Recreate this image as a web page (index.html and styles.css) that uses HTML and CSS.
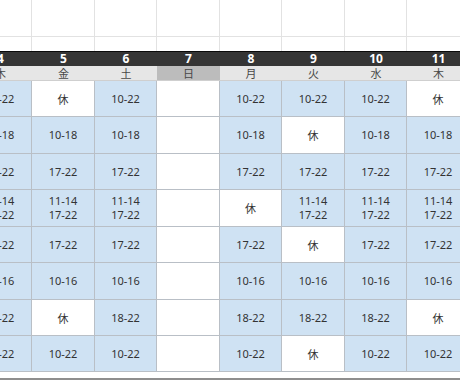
FILE: index.html
```html
<!DOCTYPE html>
<html lang="ja">
<head>
<meta charset="utf-8">
<link rel="stylesheet" href="styles.css">
</head>
<body>
<div class="sheet">
  <div class="row r-top">
    <div class="c"></div><div class="c"></div><div class="c"></div><div class="c"></div><div class="c"></div><div class="c"></div><div class="c"></div><div class="c"></div>
  </div>
  <div class="row r-top2">
    <div class="c"></div><div class="c"></div><div class="c"></div><div class="c"></div><div class="c"></div><div class="c"></div><div class="c"></div><div class="c"></div>
  </div>
  <div class="row r-date">
    <div class="c">4</div><div class="c">5</div><div class="c">6</div><div class="c">7</div><div class="c">8</div><div class="c">9</div><div class="c">10</div><div class="c">11</div>
  </div>
  <div class="row r-day">
    <div class="c">木</div><div class="c">金</div><div class="c">土</div><div class="c sun">日</div><div class="c">月</div><div class="c">火</div><div class="c">水</div><div class="c">木</div>
  </div>
  <div class="row r-data h36">
    <div class="c on">10-22</div><div class="c off">休</div><div class="c on">10-22</div><div class="c off"></div><div class="c on">10-22</div><div class="c on">10-22</div><div class="c on">10-22</div><div class="c off">休</div>
  </div>
  <div class="row r-data h37">
    <div class="c on">10-18</div><div class="c on">10-18</div><div class="c on">10-18</div><div class="c off"></div><div class="c on">10-18</div><div class="c off">休</div><div class="c on">10-18</div><div class="c on">10-18</div>
  </div>
  <div class="row r-data h36">
    <div class="c on">17-22</div><div class="c on">17-22</div><div class="c on">17-22</div><div class="c off"></div><div class="c on">17-22</div><div class="c on">17-22</div><div class="c on">17-22</div><div class="c on">17-22</div>
  </div>
  <div class="row r-data h37">
    <div class="c on">11-14<br>17-22</div><div class="c on">11-14<br>17-22</div><div class="c on">11-14<br>17-22</div><div class="c off"></div><div class="c off">休</div><div class="c on">11-14<br>17-22</div><div class="c on">11-14<br>17-22</div><div class="c on">11-14<br>17-22</div>
  </div>
  <div class="row r-data h36">
    <div class="c on">17-22</div><div class="c on">17-22</div><div class="c on">17-22</div><div class="c off"></div><div class="c on">17-22</div><div class="c off">休</div><div class="c on">17-22</div><div class="c on">17-22</div>
  </div>
  <div class="row r-data h37">
    <div class="c on">10-16</div><div class="c on">10-16</div><div class="c on">10-16</div><div class="c off"></div><div class="c on">10-16</div><div class="c on">10-16</div><div class="c on">10-16</div><div class="c on">10-16</div>
  </div>
  <div class="row r-data h36">
    <div class="c on">18-22</div><div class="c off">休</div><div class="c on">18-22</div><div class="c off"></div><div class="c on">18-22</div><div class="c on">18-22</div><div class="c on">18-22</div><div class="c off">休</div>
  </div>
  <div class="row r-data h36">
    <div class="c on">10-22</div><div class="c on">10-22</div><div class="c on">10-22</div><div class="c off"></div><div class="c on">10-22</div><div class="c off">休</div><div class="c on">10-22</div><div class="c on">10-22</div>
  </div>
  <div class="foot"></div>
</div>
</body>
</html>
```

FILE: styles.css
```css
html, body {
  margin: 0;
  padding: 0;
  background: #ffffff;
  overflow: hidden;
}
.sheet {
  margin-left: -31px;
  width: 501px;
  font-family: "Noto Sans", "Noto Sans CJK JP", sans-serif;
  font-size: 11px;
  color: #333333;
}
.row {
  display: grid;
  grid-template-columns: 63px 63px 62px 63px 62px 63px 62px 63px;
}
.c {
  box-sizing: border-box;
  display: flex;
  align-items: center;
  justify-content: center;
  text-align: center;
  overflow: hidden;
}
.r-top { height: 37px; }
.r-top .c, .r-top2 .c {
  border-right: 1px solid #e2e2e2;
  border-bottom: 1px solid #e2e2e2;
}
.r-top2 { height: 14px; }
.r-top2 .c { border-bottom: none; }
.r-date {
  height: 14px;
  background: #353535;
  border-top: 1px solid #0a0a0a;
  color: #ffffff;
  font-weight: bold;
  font-size: 12px;
  line-height: 14px;
}
.r-day {
  height: 15px;
  background: #e6e6e6;
  color: #484848;
  font-family: "Noto Sans CJK JP", sans-serif;
  font-size: 11px;
  line-height: 14px;
}
.r-day .c { border-bottom: 1px solid #cfcfcf; }
.r-day .sun { background: #bcbcbc; }
.h36 { height: 36px; }
.h37 { height: 37px; }
.r-data .c {
  line-height: 14px;
  border-right: 1px solid #b9bfc6;
  border-bottom: 1px solid #b9bfc6;
}
.on { background: #cfe2f3; }
.off {
  background: #ffffff;
  font-family: "Noto Sans CJK JP", sans-serif;
}
.foot {
  height: 4px;
  margin-top: 6px;
  background: #8e8e8e;
}
```
